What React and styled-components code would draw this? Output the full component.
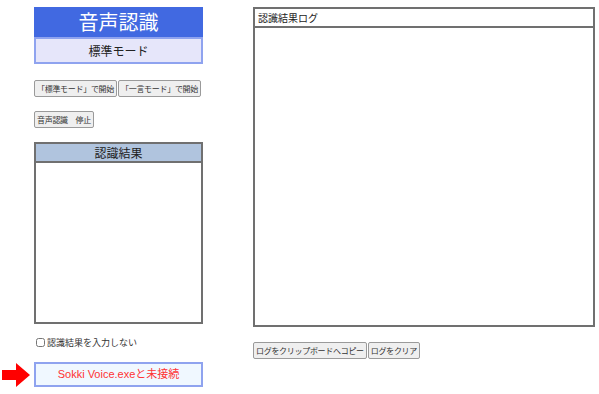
import React, { useState } from "react";
import styled, { createGlobalStyle } from "styled-components";

const GlobalStyle = createGlobalStyle`
  body {
    margin: 0;
    background: #ffffff;
    font-family: "Noto Sans CJK JP", "Noto Sans", sans-serif;
    color: #222;
  }
`;

const Page = styled.div`
  display: grid;
  grid-template-columns: 201px 342px;
  column-gap: 50px;
  padding: 7px 0 0 2px;
`;

const LeftColumn = styled.div`
  display: flex;
  flex-direction: column;
  padding-left: 32px;
`;

const Title = styled.div`
  height: 30px;
  background: #4169e1;
  color: #fff;
  font-size: 20px;
  line-height: 30px;
  text-align: center;
`;

const ModeBox = styled.div`
  height: 23px;
  background: #e6e6fa;
  border: 2px solid #8fa3ef;
  font-size: 12px;
  line-height: 23px;
  text-align: center;
`;

const ButtonRow = styled.div`
  display: flex;
  gap: 1px;
  margin-top: ${({ $top }) => $top}px;
`;

const Button = styled.button`
  height: 17px;
  padding: 0 2px;
  font-family: inherit;
  font-size: 8px;
  letter-spacing: -0.3px;
  line-height: 15px;
  color: #333;
  background: #efefef;
  border: 1px solid #9a9a9a;
  border-radius: 2px;
  white-space: nowrap;
  cursor: pointer;
`;

const Panel = styled.div`
  display: flex;
  flex-direction: column;
  border: 2px solid #707070;
  height: ${({ $height }) => $height}px;
  box-sizing: border-box;
  margin-top: ${({ $top }) => $top || 0}px;
`;

const PanelHeader = styled.div`
  height: 17px;
  border-bottom: 2px solid #707070;
  background: ${({ $bg }) => $bg || "#fff"};
  font-size: ${({ $center }) => ($center ? 12 : 10)}px;
  line-height: 17px;
  text-align: ${({ $center }) => ($center ? "center" : "left")};
  padding: 0 3px;
`;

const PanelBody = styled.div`
  flex: 1;
  background: #fff;
`;

const CheckRow = styled.label`
  display: flex;
  align-items: center;
  gap: 2px;
  margin-top: 12px;
  padding-left: 2px;
  font-size: 9px;
  color: #333;
`;

const Check = styled.input`
  width: 9px;
  height: 9px;
  margin: 0;
`;

const ConnectRow = styled.div`
  display: flex;
  align-items: center;
  gap: 4px;
  margin-top: 13px;
  margin-left: -32px;
`;

const ConnectButton = styled.div`
  width: 165px;
  height: 21px;
  background: #f0f8ff;
  border: 2px solid #8fa3ef;
  color: #ff3333;
  font-family: "Liberation Sans", "Noto Sans CJK JP", sans-serif;
  font-size: 11px;
  line-height: 21px;
  text-align: center;
`;

const RightColumn = styled.div`
  display: flex;
  flex-direction: column;
`;

const Arrow = () => (
  <svg width="28" height="24" viewBox="0 0 28 24">
    <path d="M0 7 H14 V0 L28 12 L14 24 V17 H0 Z" fill="#ff0000" />
  </svg>
);

export default function App() {
  const [noInput, setNoInput] = useState(false);
  return (
    <>
      <GlobalStyle />
      <Page>
        <LeftColumn>
          <Title>音声認識</Title>
          <ModeBox>標準モード</ModeBox>
          <ButtonRow $top={16}>
            <Button>「標準モード」で開始</Button>
            <Button>「一言モード」で開始</Button>
          </ButtonRow>
          <ButtonRow $top={14}>
            <Button>音声認識　停止</Button>
          </ButtonRow>
          <Panel $height={182} $top={14}>
            <PanelHeader $bg="#b0c4de" $center>
              認識結果
            </PanelHeader>
            <PanelBody />
          </Panel>
          <CheckRow>
            <Check
              type="checkbox"
              checked={noInput}
              onChange={() => setNoInput(!noInput)}
            />
            認識結果を入力しない
          </CheckRow>
          <ConnectRow>
            <Arrow />
            <ConnectButton>Sokki Voice.exeと未接続</ConnectButton>
          </ConnectRow>
        </LeftColumn>
        <RightColumn>
          <Panel $height={320}>
            <PanelHeader>認識結果ログ</PanelHeader>
            <PanelBody />
          </Panel>
          <ButtonRow $top={15}>
            <Button>ログをクリップボードへコピー</Button>
            <Button>ログをクリア</Button>
          </ButtonRow>
        </RightColumn>
      </Page>
    </>
  );
}
